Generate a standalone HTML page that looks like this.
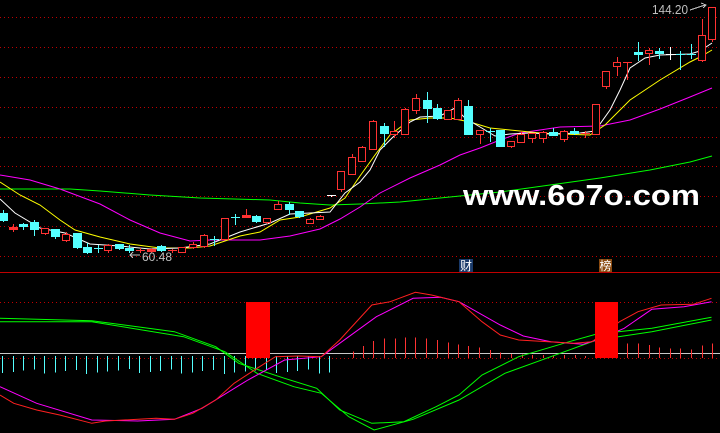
<!DOCTYPE html>
<html><head><meta charset="utf-8"><style>
html,body{margin:0;padding:0;background:#000;width:720px;height:433px;overflow:hidden}
svg{display:block}
</style></head><body>
<svg id="s" width="720" height="433" xmlns="http://www.w3.org/2000/svg" shape-rendering="crispEdges">
<rect width="720" height="433" fill="#000"/>
<g id="grid" stroke="#c00000" stroke-width="1" stroke-dasharray="1,3"></g>
<line x1="0" y1="272.5" x2="720" y2="272.5" stroke="#c00000"/>
<line x1="0" y1="353.5" x2="720" y2="353.5" stroke="#c8c8c8"/>
<g id="hist"></g>
<g id="ma" fill="none" stroke-width="1" shape-rendering="auto"></g>
<g id="candles"></g>
<g id="low" fill="none" stroke-width="1" shape-rendering="auto"></g>
<rect x="246" y="302" width="24" height="56" fill="#ff0000"/>
<rect x="595" y="302" width="23" height="56" fill="#ff0000"/>
<text x="463" y="205" font-family="Liberation Sans, sans-serif" font-weight="bold" font-size="29" fill="#fff" textLength="237" lengthAdjust="spacingAndGlyphs">www.6o7o.com</text>
<text x="652" y="14" font-family="Liberation Sans, sans-serif" font-size="13" fill="#c0c0c0" textLength="36" lengthAdjust="spacingAndGlyphs">144.20</text>
<polyline points="690,10 705,5" stroke="#c0c0c0" fill="none"/>
<polyline points="701,3 706,5 703,8" stroke="#c0c0c0" fill="none"/>
<text x="142" y="261" font-family="Liberation Sans, sans-serif" font-size="12" fill="#c0c0c0" textLength="30" lengthAdjust="spacingAndGlyphs">60.48</text>
<polyline points="130,255 140,255" stroke="#c0c0c0"/>
<polyline points="133,252 130,255 133,258" stroke="#c0c0c0" fill="none"/>
<rect x="459" y="259" width="14" height="13" fill="#1a3a6a"/>
<text x="460" y="270" font-family="Noto Sans CJK SC, sans-serif" font-size="12" fill="#fff">财</text>
<rect x="599" y="259" width="13" height="13" fill="#8a4a10"/>
<text x="599.5" y="270" font-family="Noto Sans CJK SC, sans-serif" font-size="12" fill="#fff">榜</text>
</svg>
<script>
var NS="http://www.w3.org/2000/svg";
function el(p,t,a){var e=document.createElementNS(NS,t);for(var k in a)e.setAttribute(k,a[k]);document.getElementById(p).appendChild(e);return e;}
[17,47,77,107,137,166,196,226,256,302,358].forEach(function(y){el("grid","line",{x1:0,y1:y+.5,x2:720,y2:y+.5});});
// candles: x, top, bottom, wickTop, wickBot, color(r/c/w)
var C=[[3,213,220,210,221,'c'],[13,227,229,224,231,'r'],[23,224,226,223,229,'c'],[34,222,229,220,235,'c'],[45,228,233,228,234,'r'],[55,229,236,229,238,'c'],[66,234,240,232,241,'r'],[77,233,247,233,248,'c'],[87,247,252,243,253,'c'],[98,248,249,245,252,'c'],[108,245,250,244,252,'r'],[119,244,248,244,249,'c'],[129,248,250,245,252,'c'],[140,250,251,248,252,'r'],[151,249,251,248,252,'r'],[161,246,250,245,251,'c'],[172,250,251,249,252,'r'],[182,247,252,247,252,'r'],[193,244,247,242,248,'r'],[204,235,246,234,247,'r'],[214,239,240,236,245,'c'],[225,218,239,218,239,'r'],[235,217,218,214,224,'c'],[246,215,217,209,217,'r'],[256,216,221,215,222,'c'],[267,218,222,218,223,'r'],[278,204,209,201,209,'r'],[289,204,209,202,214,'c'],[299,211,216,211,217,'c'],[310,219,223,218,223,'r'],[320,216,219,215,219,'r'],[331,195,196,195,196,'w'],[341,171,189,171,191,'r'],[352,157,174,154,174,'r'],[362,147,161,146,161,'r'],[373,121,149,120,149,'r'],[384,126,133,123,146,'c'],[394,131,134,121,137,'r'],[405,109,134,108,134,'r'],[416,98,110,94,113,'r'],[427,100,108,92,122,'c'],[437,108,118,104,119,'c'],[448,110,119,110,119,'r'],[458,100,119,98,119,'r'],[468,106,134,100,134,'c'],[480,130,134,130,143,'r'],[490,131,132,128,141,'c'],[500,130,146,130,146,'c'],[511,141,146,141,147,'r'],[521,134,142,131,142,'r'],[532,133,138,133,142,'r'],[543,132,138,131,142,'r'],[553,132,135,128,135,'c'],[564,131,139,130,141,'r'],[574,131,133,128,134,'c'],[585,133,134,131,137,'r'],[596,104,134,104,134,'r'],[606,71,86,71,88,'r'],[617,62,66,57,75,'r'],[627,62,63,62,79,'r'],[638,52,54,42,60,'c'],[649,50,53,48,64,'r'],[659,51,53,48,58,'c'],[670,54,55,47,59,'w'],[680,54,55,51,69,'c'],[691,54,55,44,58,'c'],[702,35,60,19,61,'r'],[712,7,39,7,41,'r']];
C.forEach(function(c){var x=c[0],col=c[5]=='r'?'#ff3232':c[5]=='c'?'#54ffff':'#fff';
el("candles","line",{x1:x+.5,y1:c[3],x2:x+.5,y2:c[4]+1,stroke:col});
var h=Math.max(1,c[2]-c[1]);
if(c[5]=='r'&&h>2)el("candles","rect",{x:x-3.5,y:c[1]+.5,width:7,height:h,fill:"#000",stroke:col});
else el("candles","rect",{x:x-4,y:c[1],width:9,height:h+ (h<2?0:1),fill:col});});
function pl(p,pts,col){el(p,"polyline",{points:pts.map(function(a){return a.join(",")}).join(" "),stroke:col});}
pl("ma",[[0,189],[70,189],[100,191],[150,195],[200,198],[270,200],[300,203],[330,205],[360,204],[400,202],[450,197],[500,192],[550,185],[600,178],[650,170],[690,162],[712,156]],"#00ff00");
pl("ma",[[0,175],[30,180],[60,189],[100,204],[130,220],[160,233],[190,241],[210,240],[260,240],[290,236],[320,229],[340,219],[360,207],[380,193],[410,178],[440,165],[460,155],[480,148],[500,140],[520,133],[540,130],[560,127],[600,126],[630,120],[660,109],[690,97],[712,88]],"#ff00ff");
pl("ma",[[0,182],[20,195],[40,205],[60,220],[75,230],[100,237],[130,244],[160,248],[190,248],[210,246],[240,236],[260,232],[280,220],[300,217],[330,208],[345,198],[360,176],[375,155],[390,135],[410,120],[430,118],[450,118],[470,122],[490,128],[510,130],[540,133],[560,134],[590,135],[605,125],[630,100],[660,80],[690,62],[700,57],[712,50]],"#ffff00");
pl("ma",[[0,199],[15,213],[40,228],[65,233],[90,244],[120,246],[150,249],[180,248],[210,244],[240,232],[270,223],[290,214],[310,213],[330,212],[345,193],[360,182],[370,170],[380,150],[392,138],[410,122],[420,117],[440,116],[455,108],[465,118],[480,127],[495,136],[510,134],[530,133],[550,134],[580,133],[595,131],[610,110],[620,90],[630,68],[645,58],[660,55],[690,54],[700,51],[712,43]],"#ffffff");
// histogram
for(var x=2;x<=330;x+=10.55){var b=369+((x*7)%5);el("hist","line",{x1:Math.round(x)+.5,y1:356,x2:Math.round(x)+.5,y2:b,stroke:"#54ffff"});}
var R=[[768,275],[790,258],[812,243],[836,235],[860,235],[882,232],[905,232],[928,235],[952,240],[975,248],[998,253],[1020,258],[1043,262],[1067,270],[1090,278],[1113,282],[1137,283],[1160,285],[1183,285],[1205,288],[1228,285],[1252,285],[1275,288],[1366,250],[1390,250],[1413,255],[1436,262],[1460,265],[1482,265],[1506,268],[1530,256],[1552,250]];
R.forEach(function(r){var x=Math.round(r[0]*0.459)+.5;el("hist","line",{x1:x,y1:r[1]/3+260,x2:x,y2:358,stroke:"#ff3232"});});
function cv(a){return a.map(function(p){return [(p[0]*0.459).toFixed(1),(p[1]/3+260).toFixed(1)];});}
pl("low",cv([[0,175],[200,182],[380,215],[470,260],[520,310],[620,355],[690,385],[740,450],[810,490],[880,485],[950,440],[1000,405],[1050,345],[1130,290],[1240,245],[1300,222],[1420,205],[1550,172]]),"#00ff00");
pl("low",cv([[0,185],[200,185],[400,230],[490,275],[560,340],[640,380],[700,400],[760,470],[815,510],[900,478],[1000,420],[1100,340],[1200,290],[1300,240],[1420,215],[1550,180]]),"#00ff00");
pl("low",cv([[0,380],[80,430],[200,480],[300,483],[380,478],[440,445],[540,360],[620,300],[700,290],[760,230],[820,170],[900,115],[960,112],[1000,125],[1090,195],[1140,228],[1200,245],[1270,253],[1300,240],[1360,205],[1420,148],[1490,140],[1550,125]]),"#ff00ff");
pl("low",cv([[0,405],[30,430],[80,450],[130,465],[200,490],[230,483],[340,475],[380,478],[420,460],[470,420],[510,370],[560,325],[600,290],[650,288],[700,290],[740,240],[810,135],[850,125],[905,97],[940,105],[1000,125],[1050,185],[1090,225],[1130,240],[1250,250],[1290,245],[1350,185],[1390,155],[1440,135],[1510,133],[1550,115]]),"#ff2020");
</script>
</body></html>
